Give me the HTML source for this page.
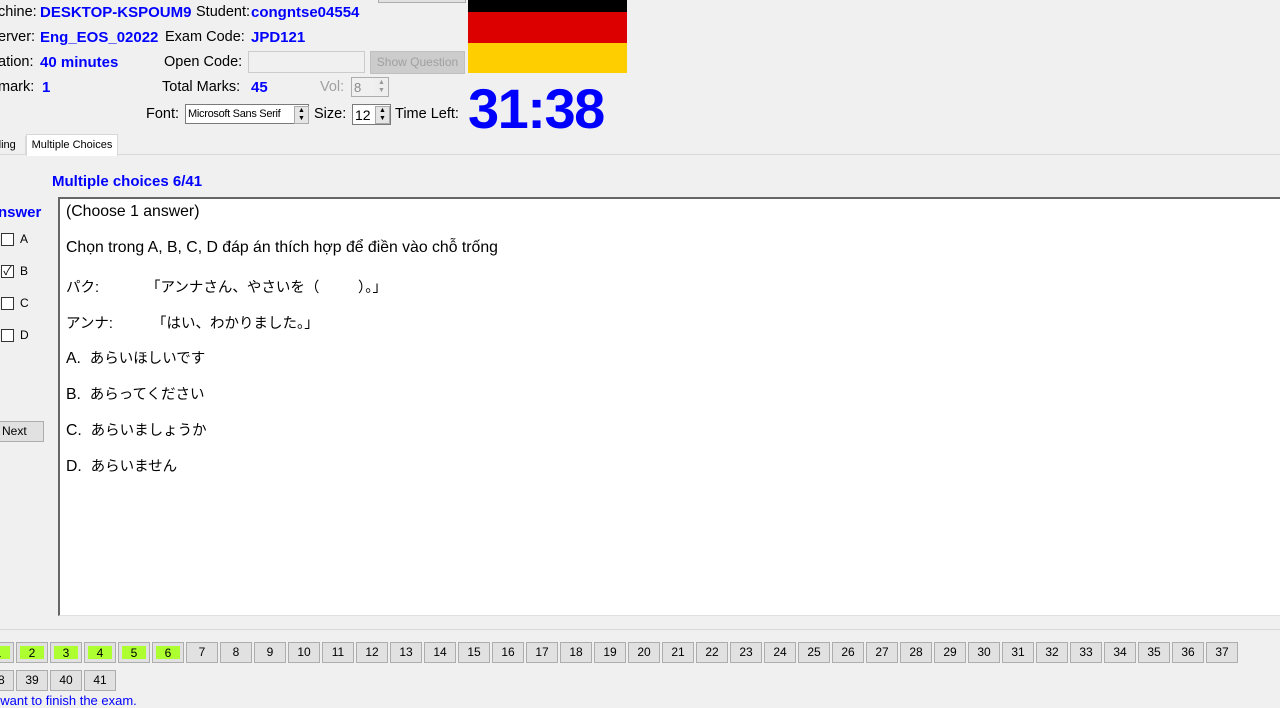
<!DOCTYPE html>
<html><head><meta charset="utf-8"><style>
body{margin:0;width:1280px;height:707px;background:#f0f0f0;overflow:hidden;position:relative;font-family:"Liberation Sans","Noto Sans CJK JP",sans-serif;}
.a{position:absolute;white-space:nowrap;}
.l{font-size:14.5px;color:#000;}
.v{font-size:15px;color:#0000ff;font-weight:bold;}
.btn{position:absolute;width:30px;height:19px;border:1px solid #adadad;background:#e1e1e1;font-size:12px;text-align:center;line-height:19px;color:#000;box-sizing:content-box;}
.btn.g span{position:absolute;left:3px;top:3px;right:3px;bottom:3px;background:#adff2f;line-height:14px;}
.cb{position:absolute;left:1px;width:11px;height:11px;border:1px solid #333;background:#fff;}
.q{position:absolute;left:66px;font-size:15.8px;color:#000;white-space:nowrap;}
.j{font-size:14.5px;}
</style></head><body>
<div class="a l" style="left:-2px;top:4px">chine:</div>
<div class="a v" style="left:40px;top:4px">DESKTOP-KSPOUM9</div>
<div class="a l" style="left:196px;top:4px">Student:</div>
<div class="a v" style="left:251px;top:4px">congntse04554</div>
<div class="a l" style="left:-2px;top:29px">erver:</div>
<div class="a v" style="left:40px;top:29px">Eng_EOS_02022</div>
<div class="a l" style="left:165px;top:29px">Exam Code:</div>
<div class="a v" style="left:251px;top:29px">JPD121</div>
<div class="a l" style="left:-2px;top:54px">ation:</div>
<div class="a v" style="left:40px;top:54px">40 minutes</div>
<div class="a l" style="left:164px;top:54px">Open Code:</div>
<div class="a" style="left:248px;top:51px;width:115px;height:20px;border:1px solid #ccc;background:#f0f0f0"></div>
<div class="a" style="left:370px;top:51px;width:93px;height:21px;border:1px solid #bfbfbf;background:#cccccc;color:#a0a0a0;font-size:12px;text-align:center;line-height:21px">Show Question</div>
<div class="a" style="left:378px;top:-5px;width:86px;height:6px;border:1px solid #adadad;background:#e1e1e1"></div>
<div class="a l" style="left:-2px;top:79px">mark:</div>
<div class="a v" style="left:42px;top:79px">1</div>
<div class="a l" style="left:162px;top:79px">Total Marks:</div>
<div class="a v" style="left:251px;top:79px">45</div>
<div class="a l" style="left:320px;top:79px;color:#a0a0a0">Vol:</div>
<div class="a" style="left:351px;top:77px;width:38px;height:20px;border:1px solid #adadad;background:#f0f0f0;font-size:13px;color:#888;line-height:20px;padding-left:2px;box-sizing:border-box">8</div>
<div class="a" style="left:375px;top:79px;width:13px;height:16px;background:#eee;font-size:7px;line-height:8px;text-align:center;color:#999">▲<br>▼</div>
<div class="a l" style="left:146px;top:106px">Font:</div>
<div class="a" style="left:185px;top:104px;width:124px;height:20px;border:1px solid #7a7a7a;background:#fff;font-size:11px;line-height:19px;padding-left:2px;box-sizing:border-box;letter-spacing:-0.3px">Microsoft Sans Serif</div>
<div class="a" style="left:294px;top:106px;width:13px;height:16px;background:#e5e5e5;border:1px solid #aaa;font-size:7px;line-height:8px;text-align:center">▲<br>▼</div>
<div class="a l" style="left:314px;top:106px">Size:</div>
<div class="a" style="left:352px;top:104px;width:39px;height:21px;border:1px solid #7a7a7a;background:#fff;font-size:14px;line-height:20px;padding-left:2px;box-sizing:border-box">12</div>
<div class="a" style="left:375px;top:106px;width:13px;height:16px;background:#e5e5e5;border:1px solid #aaa;font-size:7px;line-height:8px;text-align:center">▲<br>▼</div>
<div class="a l" style="left:395px;top:106px">Time Left:</div>
<div class="a" style="left:468px;top:0;width:159px;height:12px;background:#000"></div>
<div class="a" style="left:468px;top:12px;width:159px;height:31px;background:#dd0000"></div>
<div class="a" style="left:468px;top:43px;width:159px;height:30px;background:#ffce00"></div>
<div class="a" style="left:468px;top:76px;font-size:56px;color:#0000ff;font-weight:bold;letter-spacing:-1.5px">31:38</div>
<div class="a" style="left:0;top:154px;width:1280px;height:1px;background:#d8d8d8"></div>
<div class="a" style="left:-5px;top:136px;width:30px;height:18px;font-size:11px;line-height:18px;border-right:1px solid #d8d8d8">ding</div>
<div class="a" style="left:26px;top:134px;width:90px;height:21px;background:#fff;border:1px solid #d8d8d8;border-bottom:none;font-size:11px;line-height:20px;text-align:center">Multiple Choices</div>
<div class="a v" style="left:52px;top:173px">Multiple choices 6/41</div>
<div class="a v" style="left:-2px;top:204px">nswer</div>
<div class="cb" style="top:233px"></div><div class="a" style="left:20px;top:232px;font-size:12px">A</div>
<div class="cb" style="top:265px"></div><div class="a" style="left:1px;top:262px;font-size:12px;width:13px;text-align:center">✓</div><div class="a" style="left:20px;top:264px;font-size:12px">B</div>
<div class="cb" style="top:297px"></div><div class="a" style="left:20px;top:296px;font-size:12px">C</div>
<div class="cb" style="top:329px"></div><div class="a" style="left:20px;top:328px;font-size:12px">D</div>
<div class="a" style="left:-2px;top:421px;width:41px;height:19px;border:1px solid #adadad;background:#e1e1e1;font-size:12px;line-height:19px;padding-left:3px">Next</div>
<div class="a" style="left:58px;top:197px;width:1230px;height:416px;background:#fff;border-left:2px solid #666;border-top:2px solid #666;border-bottom:1px solid #e0e0e0"></div>
<div class="q" style="top:203px">(Choose 1 answer)</div>
<div class="q" style="top:239px">Chọn trong A, B, C, D đáp án thích hợp để điền vào chỗ trống</div>
<div class="q j" style="top:276px">パク:</div><div class="q j" style="top:276px;left:146px">「アンナさん、やさいを（</div><div class="q j" style="top:276px;left:358px">）。」</div>
<div class="q j" style="top:312px">アンナ:</div><div class="q j" style="top:312px;left:152px">「はい、わかりました。」</div>
<div class="q" style="top:347px">A.&nbsp; <span class="j">あらいほしいです</span></div>
<div class="q" style="top:383px">B.&nbsp; <span class="j">あらってください</span></div>
<div class="q" style="top:419px">C.&nbsp; <span class="j">あらいましょうか</span></div>
<div class="q" style="top:455px">D.&nbsp; <span class="j">あらいません</span></div>
<div class="a" style="left:0;top:629px;width:1280px;height:1px;background:#d8d8d8"></div>
<div id="b"></div>
<div class="a" style="left:-7px;top:693px;font-size:13px;color:#0000ff">I want to finish the exam.</div>
<script>
var h='';
for(var n=1;n<=41;n++){var x,y;if(n<=37){x=16+(n-2)*34;y=642;}else{x=16+(n-39)*34;y=670;}
var g=n<=6;h+='<div class="btn'+(g?' g':'')+'" style="left:'+x+'px;top:'+y+'px">'+(g?'<span>'+n+'</span>':n)+'</div>';}
document.getElementById('b').innerHTML=h;
</script>
</body></html>
